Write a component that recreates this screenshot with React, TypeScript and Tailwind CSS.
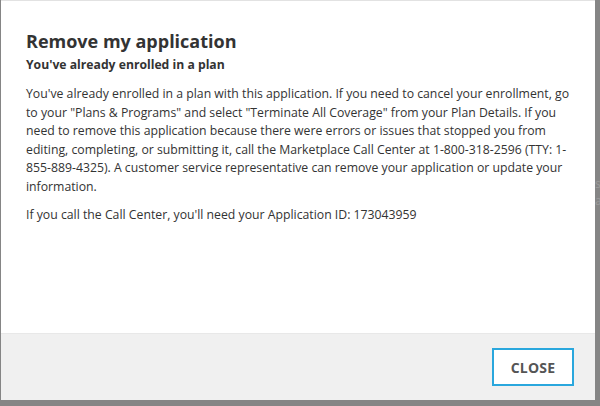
import React from 'react';

const App: React.FC = () => {
  return (
    <div
      className="w-[600px] h-[406px] bg-[#858585] flex overflow-hidden"
      style={{ fontFamily: '"Open Sans", "Liberation Sans", sans-serif' }}
    >
      <div className="w-[1px] shrink-0" />
      <div className="w-[594px] h-[400px] shrink-0 bg-white border-t border-[#e2e2e2] flex flex-col">
        <div className="flex-1 pl-[25px] pr-[15px] pt-[28px] text-[#333333]">
          <h1 className="text-[18px] leading-[24px] font-bold">Remove my application</h1>
          <h2 className="text-[12.2px] leading-[18px] font-bold mt-[3px]">You've already enrolled in a plan</h2>
          <p className="text-[12.25px] leading-[18.5px] mt-[11px] whitespace-nowrap">
            You've already enrolled in a plan with this application. If you need to cancel your enrollment, go
            <br />
            to your "Plans &amp; Programs" and select "Terminate All Coverage" from your Plan Details. If you
            <br />
            need to remove this application because there were errors or issues that stopped you from
            <br />
            editing, completing, or submitting it, call the Marketplace Call Center at 1-800-318-2596 (TTY: 1-
            <br />
            855-889-4325). A customer service representative can remove your application or update your
            <br />
            information.
          </p>
          <p className="text-[12.25px] leading-[18px] mt-[10px]">
            If you call the Call Center, you'll need your Application ID: 173043959
          </p>
        </div>
        <div className="h-[67px] bg-[#f0f0f0] border-t border-[#e8e8e8] flex justify-end items-start pt-[14px] pr-[21px]">
          <button className="w-[82px] h-[38px] bg-white border-2 border-[#2aa7dd] text-[14px] font-bold text-[#555555] tracking-[0.2px]">
            CLOSE
          </button>
        </div>
      </div>
      <div className="flex-1 overflow-hidden pt-[175px] text-[12px] leading-[17px] text-[#9c9c9c] whitespace-nowrap">
        <div>s</div>
        <div>a</div>
      </div>
    </div>
  );
};

export default App;
